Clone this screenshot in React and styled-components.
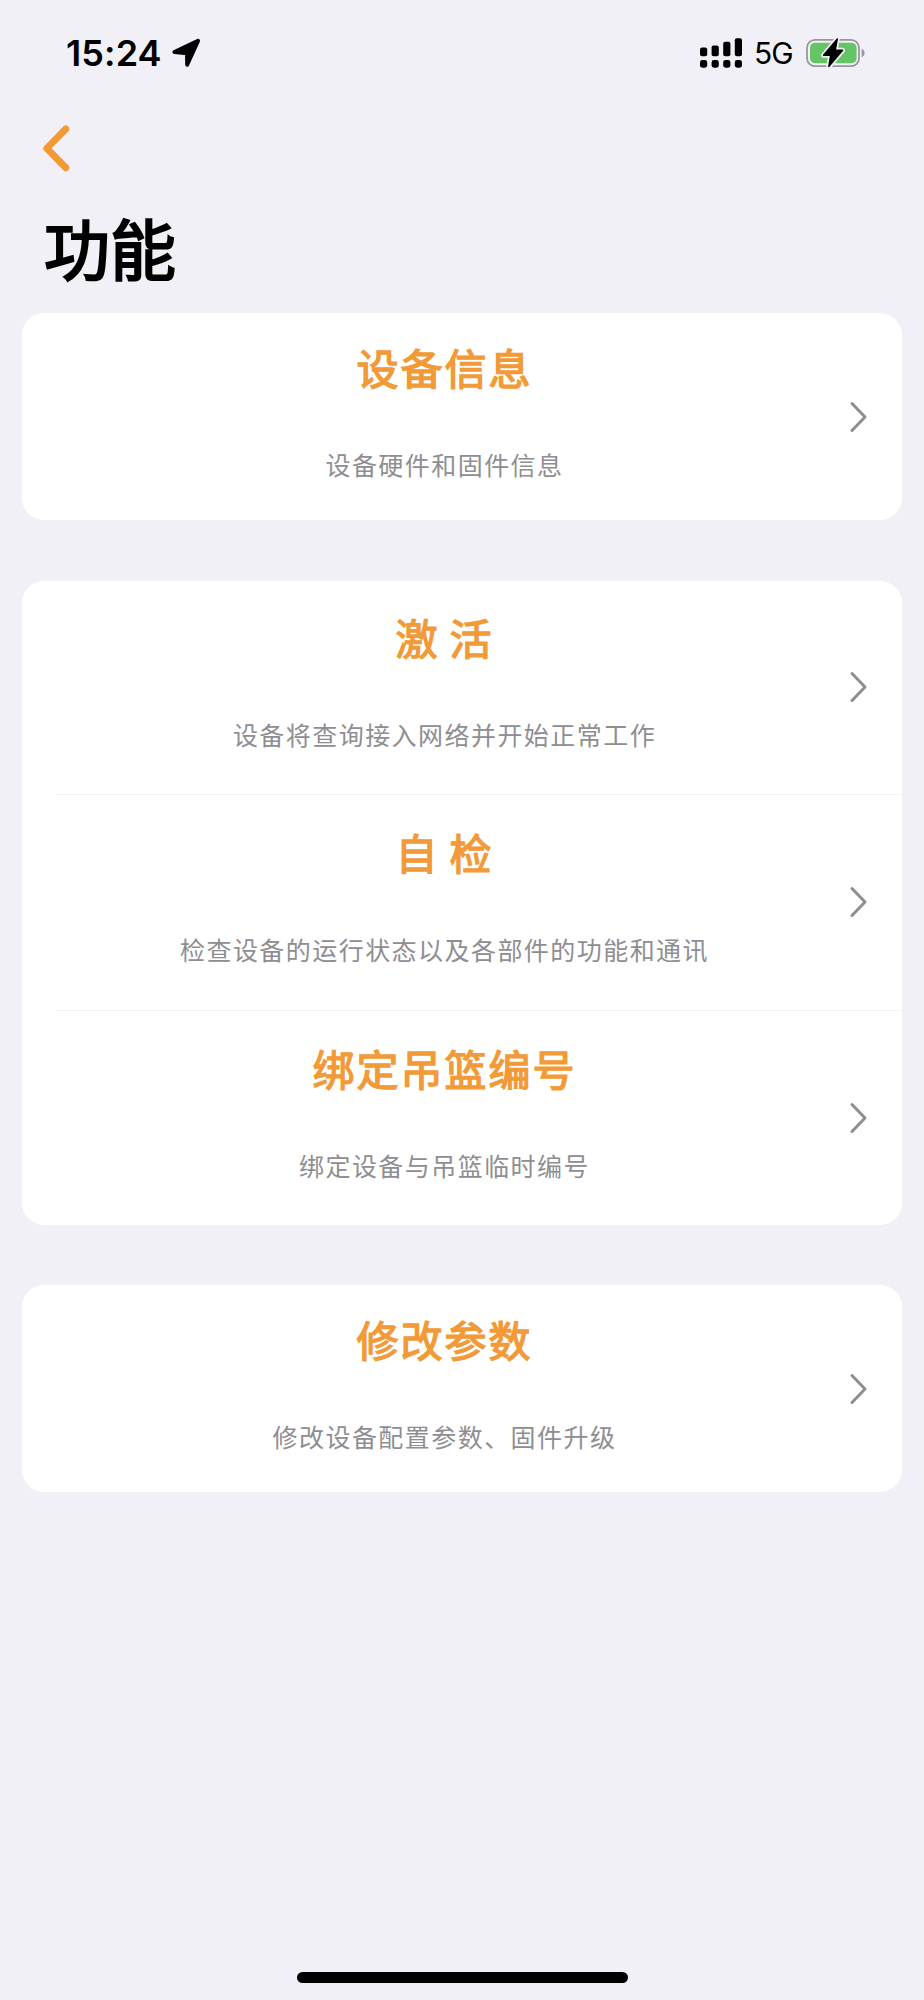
import React from "react";
import styled, { createGlobalStyle } from "styled-components";

const GlobalStyle = createGlobalStyle`
  * {
    box-sizing: border-box;
  }
  body {
    margin: 0;
    background: #f1f0f6;
    font-family: "Inter", "Noto Sans CJK SC", sans-serif;
  }
`;

const groups = [
  [{ title: "设备信息", desc: "设备硬件和固件信息" }],
  [
    { title: "激 活", desc: "设备将查询接入网络并开始正常工作" },
    { title: "自 检", desc: "检查设备的运行状态以及各部件的功能和通讯" },
    { title: "绑定吊篮编号", desc: "绑定设备与吊篮临时编号" },
  ],
  [{ title: "修改参数", desc: "修改设备配置参数、固件升级" }],
];

function LocationIcon() {
  return (
    <svg width="30" height="30" viewBox="0 0 30 30">
      <path
        d="M3.4 14 L27 2.8 L16.2 26.6 L16 15.2 Z"
        stroke="#000"
        strokeWidth="4"
        strokeLinejoin="round"
      />
    </svg>
  );
}

function SignalIcon() {
  return (
    <svg width="42" height="30" viewBox="0 0 42 30">
      <rect x="0" y="9.5" width="7.2" height="8.7" rx="2" />
      <rect x="11.6" y="7.5" width="7.2" height="10.7" rx="2" />
      <rect x="23.2" y="3.8" width="7.2" height="14.4" rx="2" />
      <rect x="34.8" y="0.2" width="7.2" height="18" rx="2" />
      <rect x="0" y="22.1" width="7.2" height="7.6" rx="2.4" />
      <rect x="11.6" y="22.1" width="7.2" height="7.6" rx="2.4" />
      <rect x="23.2" y="22.1" width="7.2" height="7.6" rx="2.4" />
      <rect x="34.8" y="22.1" width="7.2" height="7.6" rx="2.4" />
    </svg>
  );
}

function BatteryIcon() {
  const bolt = "M31.3 1 L17.5 17.3 L24.6 17.3 L22.8 28.5 L36.6 12.3 L29.2 12.3 Z";
  return (
    <svg width="60" height="30" viewBox="0 0 60 30">
      <rect
        x="1"
        y="1.8"
        width="52"
        height="26.4"
        rx="8"
        fill="none"
        stroke="#98989c"
        strokeWidth="1.8"
      />
      <path d="M55.6 10.8 C59.6 12.4 59.6 17.6 55.6 19.2 Z" fill="#98989c" />
      <rect x="4" y="4.8" width="46.6" height="20.4" rx="5" fill="#65c466" />
      <path d={bolt} fill="#f1f0f6" stroke="#f1f0f6" strokeWidth="5" strokeLinejoin="round" />
      <path d={bolt} stroke="#000" strokeWidth="1.4" strokeLinejoin="round" />
    </svg>
  );
}

function App() {
  return (
    <Page>
      <GlobalStyle />
      <StatusBar>
        <Clock>15:24</Clock>
        <LocationIcon />
        <StatusRight>
          <SignalIcon />
          <Network>5G</Network>
          <BatteryIcon />
        </StatusRight>
      </StatusBar>
      <NavBar>
        <BackButton aria-label="返回">
          <svg width="28" height="48" viewBox="0 0 28 48" fill="none">
            <path
              d="M23.8 5 L4.8 24.4 L23.8 43.8"
              stroke="#f19a37"
              strokeWidth="7"
              strokeLinecap="round"
              strokeLinejoin="round"
            />
          </svg>
        </BackButton>
      </NavBar>
      <Heading>功能</Heading>
      <List>
        {groups.map((rows) => (
          <Card key={rows[0].title}>
            {rows.map((row) => (
              <Row key={row.title}>
                <Texts>
                  <Title>{row.title}</Title>
                  <Desc>{row.desc}</Desc>
                </Texts>
                <svg width="20" height="32" viewBox="0 0 20 32" fill="none">
                  <path
                    d="M3 2.5 L16 16 L3 29.5"
                    stroke="#8e8e92"
                    strokeWidth="3"
                    strokeLinecap="round"
                    strokeLinejoin="round"
                  />
                </svg>
              </Row>
            ))}
          </Card>
        ))}
      </List>
      <HomeIndicator />
    </Page>
  );
}

const Page = styled.div`
  display: flex;
  flex-direction: column;
  width: 924px;
  height: 2000px;
  background: #f1f0f6;
  overflow: hidden;
`;

const StatusBar = styled.header`
  display: flex;
  align-items: center;
  height: 105px;
  padding: 0 58px 0 66px;
`;

const Clock = styled.span`
  width: 105px;
  font-size: 36px;
  font-weight: 600;
  line-height: 44px;
  letter-spacing: 0.1px;
`;

const StatusRight = styled.div`
  display: flex;
  align-items: center;
  margin-left: auto;
`;

const Network = styled.span`
  width: 64px;
  padding-left: 12px;
  font-size: 30px;
  line-height: 36px;
  letter-spacing: -1px;
`;

const NavBar = styled.nav`
  height: 96px;
  padding: 19px 42px 0;
`;

const BackButton = styled.button`
  display: block;
  padding: 0;
  border: 0;
  background: none;

  svg {
    display: block;
  }
`;

const Heading = styled.h1`
  height: 112.4px;
  margin: 0;
  padding: 0 44px;
  font-size: 66px;
  font-weight: 400;
  line-height: 100px;
  -webkit-text-stroke: 2.2px #000;
`;

const List = styled.main`
  display: flex;
  flex-direction: column;
  gap: 60.5px;
  padding: 0 22px;
`;

const Card = styled.section`
  border-radius: 22px;
  background: #fff;
  overflow: hidden;
`;

const Row = styled.div`
  display: flex;
  align-items: center;
  height: 207px;
  margin-left: 33px;
  padding-right: 33px;

  &:not(:only-child) {
    height: 213px;
  }

  & + & {
    height: 216px;
    border-top: 1px solid #f3f3f5;
  }

  & + &:last-child {
    height: 215px;
  }
`;

const Texts = styled.div`
  display: flex;
  flex: 1;
  flex-direction: column;
  align-items: center;
  gap: 44px;
  padding: 0 15px 2px 0;
`;

const Title = styled.h2`
  margin: 0;
  color: #f19a37;
  font-size: 42px;
  font-weight: 400;
  line-height: 56px;
  letter-spacing: 2px;
  word-spacing: -4px;
  -webkit-text-stroke: 1.4px #f19a37;
`;

const Desc = styled.p`
  margin: 0;
  color: #8e8e92;
  font-size: 25px;
  line-height: 48px;
  letter-spacing: 1.45px;
  white-space: nowrap;
`;

const HomeIndicator = styled.div`
  width: 331px;
  height: 11px;
  margin: auto auto 17px;
  border-radius: 6px;
  background: #000;
`;

export default App;
